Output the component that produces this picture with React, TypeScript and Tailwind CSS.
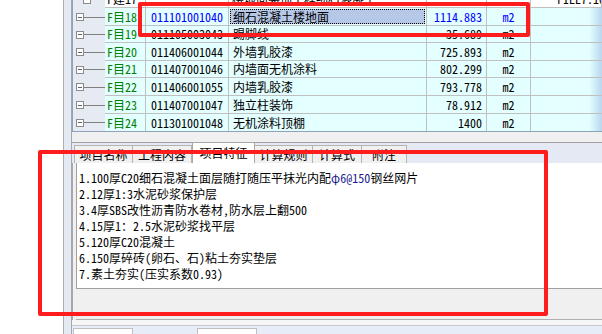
import React from 'react';

const font = { fontFamily: '"Noto Sans Mono CJK SC", "Noto Sans CJK SC", monospace' };

type Row = { id: string; code: string; name: string; qty: string; unit: string; sel?: boolean };

const rows: Row[] = [
  { id: 'F目18', code: '011101001040', name: '细石混凝土楼地面', qty: '1114.883', unit: 'm2', sel: true },
  { id: 'F目19', code: '011105003043', name: '踢脚线', qty: '35.689', unit: 'm2' },
  { id: 'F目20', code: '011406001044', name: '外墙乳胶漆', qty: '725.893', unit: 'm2' },
  { id: 'F目21', code: '011407001046', name: '内墙面无机涂料', qty: '802.299', unit: 'm2' },
  { id: 'F目22', code: '011406001055', name: '内墙乳胶漆', qty: '793.778', unit: 'm2' },
  { id: 'F目23', code: '011407001047', name: '独立柱装饰', qty: '78.912', unit: 'm2' },
  { id: 'F目24', code: '011301001048', name: '无机涂料顶棚', qty: '1400', unit: 'm2' },
];

const heights = ['h-[18px]', 'h-[17px]', 'h-[18px]', 'h-[17px]', 'h-[18px]', 'h-[18px]', 'h-[17px]'];

const tabs = [
  { label: '项目名称', w: 'w-[59px]' },
  { label: '工程内容', w: 'w-[59px]' },
  { label: '项目特征', w: 'w-[63px]', active: true },
  { label: '计算规则', w: 'w-[58px]' },
  { label: '计算式', w: 'w-[49px]' },
  { label: '附注', w: 'w-[45px]' },
];

const lines = [
  <>1.100厚C20细石混凝土面层随打随压平抹光内配<span className="text-[#1a1a90]">φ6@150</span>钢丝网片</>,
  <>2.12厚1:3水泥砂浆保护层</>,
  <>3.4厚SBS改性沥青防水卷材,防水层上翻500</>,
  <>4.15厚1：2.5水泥砂浆找平层</>,
  <>5.120厚C20混凝土</>,
  <>6.150厚碎砖(卵石、石)粘土夯实垫层</>,
  <>7.素土夯实(压实系数0.93)</>,
];

function TreeMark({ indent = false }: { indent?: boolean }) {
  return (
    <div className={`flex h-full items-center ${indent ? 'pl-[10px]' : 'pl-[3px]'}`}>
      <div className="flex h-[8px] w-[8px] items-center justify-center border border-[#8a8a8a] bg-white">
        <div className="h-px w-[4px] bg-[#606060]" />
      </div>
      <div className="h-px flex-1 bg-[#808080]" />
    </div>
  );
}

const cell = 'flex items-center border-r border-[#c0c0c0] whitespace-nowrap overflow-hidden';

export default function App() {
  return (
    <div className="relative flex h-[334px] w-[602px] overflow-hidden bg-white text-[12px] leading-none text-black" style={font}>
      <div className="w-[63px] shrink-0 bg-white" />
      <div className="w-[8px] shrink-0 border-l border-[#a8aeb8] bg-[#e4e9f2]" />

      <div className="flex min-w-0 flex-1 flex-col border-l border-[#a0a8b6]">
        {/* grid */}
        <div className="h-[132px] shrink-0 overflow-hidden border-b border-l border-[#8fa2bd]">
          <div className="-mt-[9px] grid grid-cols-[32px_41px_83px_198px_60px_44px_1fr]">
            {/* row 17, mostly scrolled off */}
            <div className="h-[17px] bg-[#e6eaf2]"><TreeMark indent /></div>
            <div className={`${cell} border-b bg-white pl-[2px]`}>F建17</div>
            <div className={`${cell} border-b bg-white`} />
            <div className={`${cell} border-b bg-white pl-[3px]`}>楼地面装饰工程细石混凝土</div>
            <div className={`${cell} border-b bg-white`} />
            <div className={`${cell} border-b bg-white`} />
            <div className={`${cell} border-b bg-white pl-[26px]`}>FIEE7.10</div>

            {rows.map((r, i) => {
              const h = heights[i];
              const last = i === rows.length - 1;
              const bb = last ? '' : 'border-b';
              const blue = r.sel ? 'text-[#0000ff]' : '';
              return (
                <React.Fragment key={r.id}>
                  <div className={`${h} bg-[#e6eaf2]`}><TreeMark /></div>
                  <div className={`${h} ${cell} ${bb} border-r-[#c0c0c0] bg-[#e4ffff] pl-[2px] text-[#008000]`}>{r.id}</div>
                  <div className={`${h} ${cell} ${bb} bg-[#e4ffff] pl-[5px] ${blue}`}>{r.code}</div>
                  <div className={`${h} ${cell} ${bb} bg-[#e4ffff] p-px`}>
                    {r.sel ? (
                      <div className="flex h-full w-full items-center border border-dotted border-black bg-[#b6c8e8] pl-[2px]">{r.name}</div>
                    ) : (
                      <span className="pl-[3px]">{r.name}</span>
                    )}
                  </div>
                  <div className={`${h} ${cell} ${bb} justify-end bg-[#e4ffff] pr-[4px] ${blue}`}>{r.qty}</div>
                  <div className={`${h} ${cell} ${bb} justify-center bg-[#e4ffff] ${blue}`}>{r.unit}</div>
                  <div className={`${h} ${cell} ${bb} border-r-0 bg-gradient-to-r from-[#e4ffff] from-[82%] to-[#b9d6ee]`} />
                </React.Fragment>
              );
            })}
          </div>
        </div>

        <div className="h-[11px] shrink-0 border-b border-[#a0a0a0] bg-[#f0f0f0]" />

        {/* tabs */}
        <div className="flex h-[20px] shrink-0 items-end bg-[#e4e9f4] pl-[2px]">
          {tabs.map((t) =>
            t.active ? (
              <div key={t.label} className={`${t.w} flex h-[21px] items-center justify-center border-x border-t border-[#a8a8a8] bg-white`}>{t.label}</div>
            ) : (
              <div key={t.label} className={`${t.w} flex h-[18px] items-center justify-center border-r border-t border-[#b4b4b4] bg-[#f0f0f0] first:border-l`}>{t.label}</div>
            )
          )}
        </div>

        {/* detail panel */}
        <div className="flex h-[157px] shrink-0 flex-col border-l border-[#a8a8a8] bg-[#f0f0f0] pl-[3px]">
          <div className="flex h-[126px] flex-col border-b border-l border-[#a0a0a0] bg-white pl-[2px] pt-[7px]">
            {lines.map((l, i) => (
              <div key={i} className="h-[16px] whitespace-nowrap leading-[16px]">{l}</div>
            ))}
          </div>
          <div className="flex-1 border-b border-[#b0b0b0]" />
        </div>

        {/* bottom tab strip */}
        <div className="flex flex-1 flex-col bg-[#f6f6f6]">
          <div className="h-[6px] border-b border-[#c8c8c8]" />
          <div className="flex flex-1 items-end bg-[#e6ecf8] pl-[1px]">
            <div className="h-[6px] w-[60px] border-x border-t border-[#c0c0c0] bg-white" />
            <div className="h-[6px] w-[64px]" />
            <div className="h-[6px] w-[60px] border-x border-t border-[#c0c0c0] bg-white" />
          </div>
        </div>
      </div>

      {/* highlight marks */}
      <div className="absolute left-[138px] top-[2px] h-[35px] w-[392px] rounded-[2px] border-[4px] border-[#ff1c1c]" />
      <div className="absolute left-[38px] top-[150px] h-[166px] w-[510px] rounded-[2px] border-[4px] border-[#ff1c1c]" />
    </div>
  );
}
